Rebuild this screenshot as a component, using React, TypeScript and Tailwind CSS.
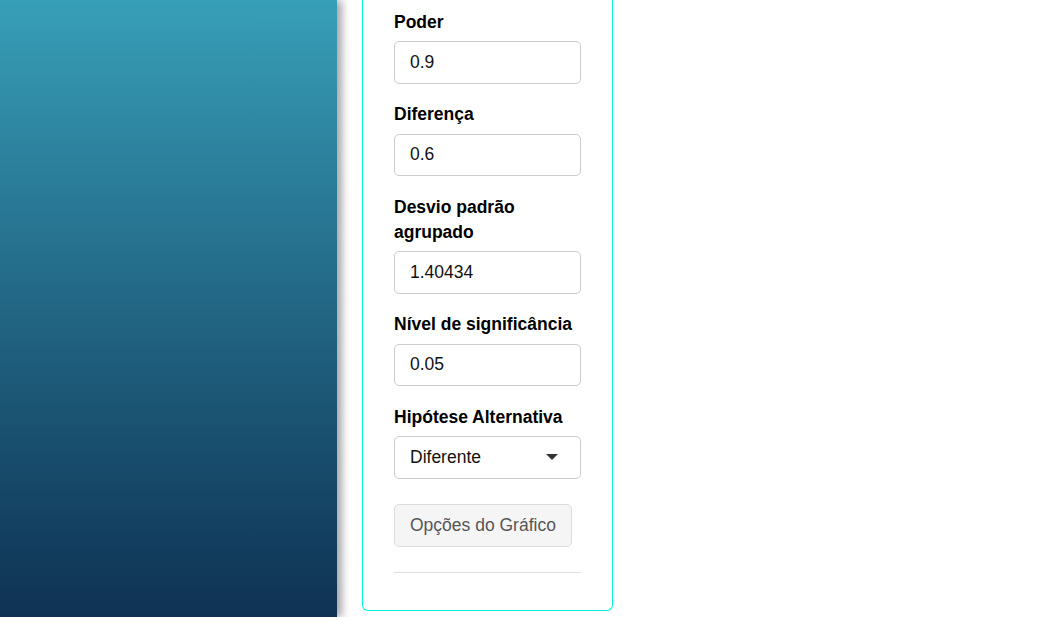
import React from 'react';

const font = { fontFamily: '"Liberation Sans", Arial, sans-serif' };

const Field = ({ label, value }: { label: React.ReactNode; value: string }) => (
  <div className="mb-[18.75px]">
    <label className="block mb-[6.25px] text-[17.5px] leading-[25px] font-bold text-black">{label}</label>
    <input
      readOnly
      value={value}
      className="block w-full h-[42.5px] px-[15px] border border-[#cccccc] rounded-[5px] bg-white text-[17.5px] text-[#111] outline-none"
    />
  </div>
);

export default function App() {
  return (
    <div className="flex h-screen overflow-hidden bg-white" style={font}>
      <div className="w-[337px] shrink-0 bg-gradient-to-b from-[#389fb8] to-[#0f3253] relative z-10 shadow-[5px_0_8px_rgba(0,0,0,0.35)]" />
      <div className="pl-[25px]">
        <div className="w-[251px] h-[611px] border border-t-0 border-[#00f5d4] rounded-b-[6px] px-[31px] pt-[9.75px]">
          <Field label="Poder" value="0.9" />
          <Field label="Diferença" value="0.6" />
          <Field label={<>Desvio padrão<br />agrupado</>} value="1.40434" />
          <Field label="Nível de significância" value="0.05" />
          <div className="mb-[25.5px]">
            <label className="block mb-[6.25px] text-[17.5px] leading-[25px] font-bold text-black">Hipótese Alternativa</label>
            <div className="flex items-center justify-between h-[42.5px] pl-[15px] pr-[22px] border border-[#cccccc] rounded-[5px] bg-white">
              <span className="text-[17.5px] text-[#111]">Diferente</span>
              <svg width="12" height="6" viewBox="0 0 12 6"><path d="M0 0h12L6 6z" fill="#333" /></svg>
            </div>
          </div>
          <button
            disabled
            className="block h-[42.5px] px-[15px] border border-[#dddddd] rounded-[5px] bg-[#f5f5f5] text-[17.5px] text-[#555] whitespace-nowrap"
          >
            Opções do Gráfico
          </button>
          <hr className="mt-[25px] border-0 border-t border-[#dddddd]" />
        </div>
      </div>
    </div>
  );
}
